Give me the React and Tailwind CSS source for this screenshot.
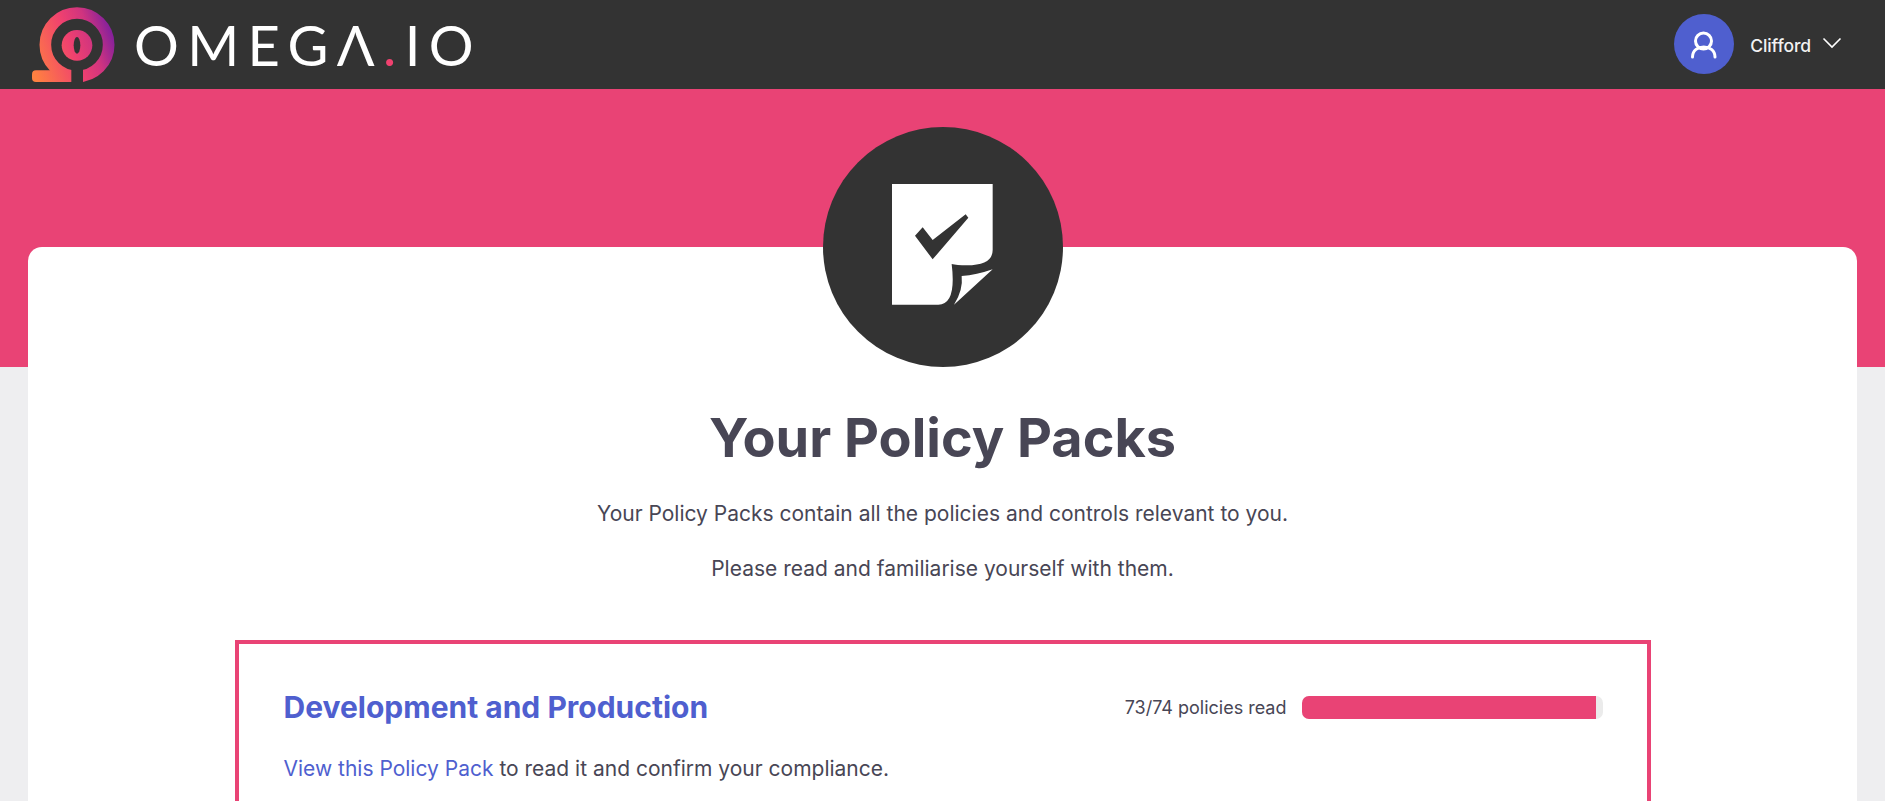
export default function App() {
  return (
    <div className="h-[801px] overflow-hidden bg-[#eeeef0] font-['Inter',sans-serif] text-[#484655]">
      <header className="flex h-[89px] items-center justify-between bg-[#333333] pl-[32px] pr-[43px]">
        <div className="flex items-center">
          <svg width="84" height="82" viewBox="97 6 252 246" className="block">
            <defs>
              <linearGradient id="lg" gradientUnits="userSpaceOnUse" x1="97" y1="200" x2="345" y2="110">
                <stop offset="0" stopColor="#ff8140" />
                <stop offset="0.5" stopColor="#f0416f" />
                <stop offset="0.75" stopColor="#d0347f" />
                <stop offset="1" stopColor="#84209c" />
              </linearGradient>
            </defs>
            <circle cx="232" cy="128" r="95" fill="none" stroke="url(#lg)" strokeWidth="35" />
            <rect x="97" y="205" width="125" height="35" rx="12" fill="url(#lg)" />
            <rect x="215" y="170" width="35" height="80" fill="#333333" />
            <circle cx="232" cy="130" r="46" fill="url(#lg)" />
            <ellipse cx="232" cy="130" rx="10" ry="25" fill="#333333" />
          </svg>
          <span className="ml-[18px] font-['Lato',sans-serif] text-[56px] font-normal leading-none tracking-[8.4px] text-white">
            OMEGΛ<span className="text-[#f0416f]">.</span>IO
          </span>
        </div>
        <div className="flex items-center">
          <div className="mb-[1px] flex h-[60px] w-[60px] items-center justify-center rounded-full bg-[#4f5fcf]">
            <svg width="60" height="60" viewBox="0 0 60 60" fill="none" stroke="white" strokeWidth="3" strokeLinecap="round">
              <circle cx="29.5" cy="27" r="8" />
              <path d="M18.5 43 C18.5 29.5 41 29.5 41 43" />
            </svg>
          </div>
          <span className="ml-[16px] mt-[3px] text-[17.5px] font-medium tracking-[-0.1px] text-[#f2f2f2]">Clifford</span>
          <svg width="20" height="12" viewBox="0 0 20 12" fill="none" stroke="white" strokeWidth="1.6" className="mb-[4px] ml-[11px]">
            <path d="M1.5 1.5 L10 10 L18.5 1.5" />
          </svg>
        </div>
      </header>
      <div className="h-[278px] bg-[#e94375]" />
      <main className="relative mx-[28px] -mt-[120px] h-[800px] rounded-t-[14px] bg-white">
        <div className="flex flex-col items-center">
          <div className="-mt-[120px] flex h-[240px] w-[240px] items-center justify-center rounded-full bg-[#333333]">
            <svg width="240" height="240" viewBox="69 51 720 720">
              <path
                fill="white"
                d="M276 222 H578 V420 Q578 466 500 466 Q470 466 455 462 Q470 584 415 584 H276 Z"
              />
              <path fill="white" d="M578 478 Q530 495 485 498 Q490 540 462 584 Z" />
              <path fill="#333333" d="M345 377 L368 352 L398 390 L497 313 L505 323 L398 448 Z" />
            </svg>
          </div>
          <h1 className="mt-[38px] text-[54px] font-bold leading-[65px]">Your Policy Packs</h1>
          <p className="mt-[29px] text-[21px] leading-[30px]">
            Your Policy Packs contain all the policies and controls relevant to you.
          </p>
          <p className="mt-[25px] text-[21px] leading-[30px]">Please read and familiarise yourself with them.</p>
          <section className="mt-[56px] h-[300px] w-[1416px] border-[4px] border-[#e94375] px-[45px] pt-[45px]">
            <div className="flex items-center justify-between">
              <h2 className="text-[30px] font-bold leading-[36px] text-[#4f5fcf]">Development and Production</h2>
              <div className="mr-[-1px] flex items-center">
                <span className="text-[18px]">73/74 policies read</span>
                <div className="ml-[15px] h-[23px] w-[301px] overflow-hidden rounded-[7px] bg-[#ebebeb]">
                  <div className="h-full bg-[#e94375]" style={{ width: `${(73 / 74) * 100 - 0.7}%` }} />
                </div>
              </div>
            </div>
            <p className="mt-[29px] text-[21px] leading-[30px]">
              <a className="text-[#4f5fcf]">View this Policy Pack</a> to read it and confirm your compliance.
            </p>
          </section>
        </div>
      </main>
    </div>
  );
}
